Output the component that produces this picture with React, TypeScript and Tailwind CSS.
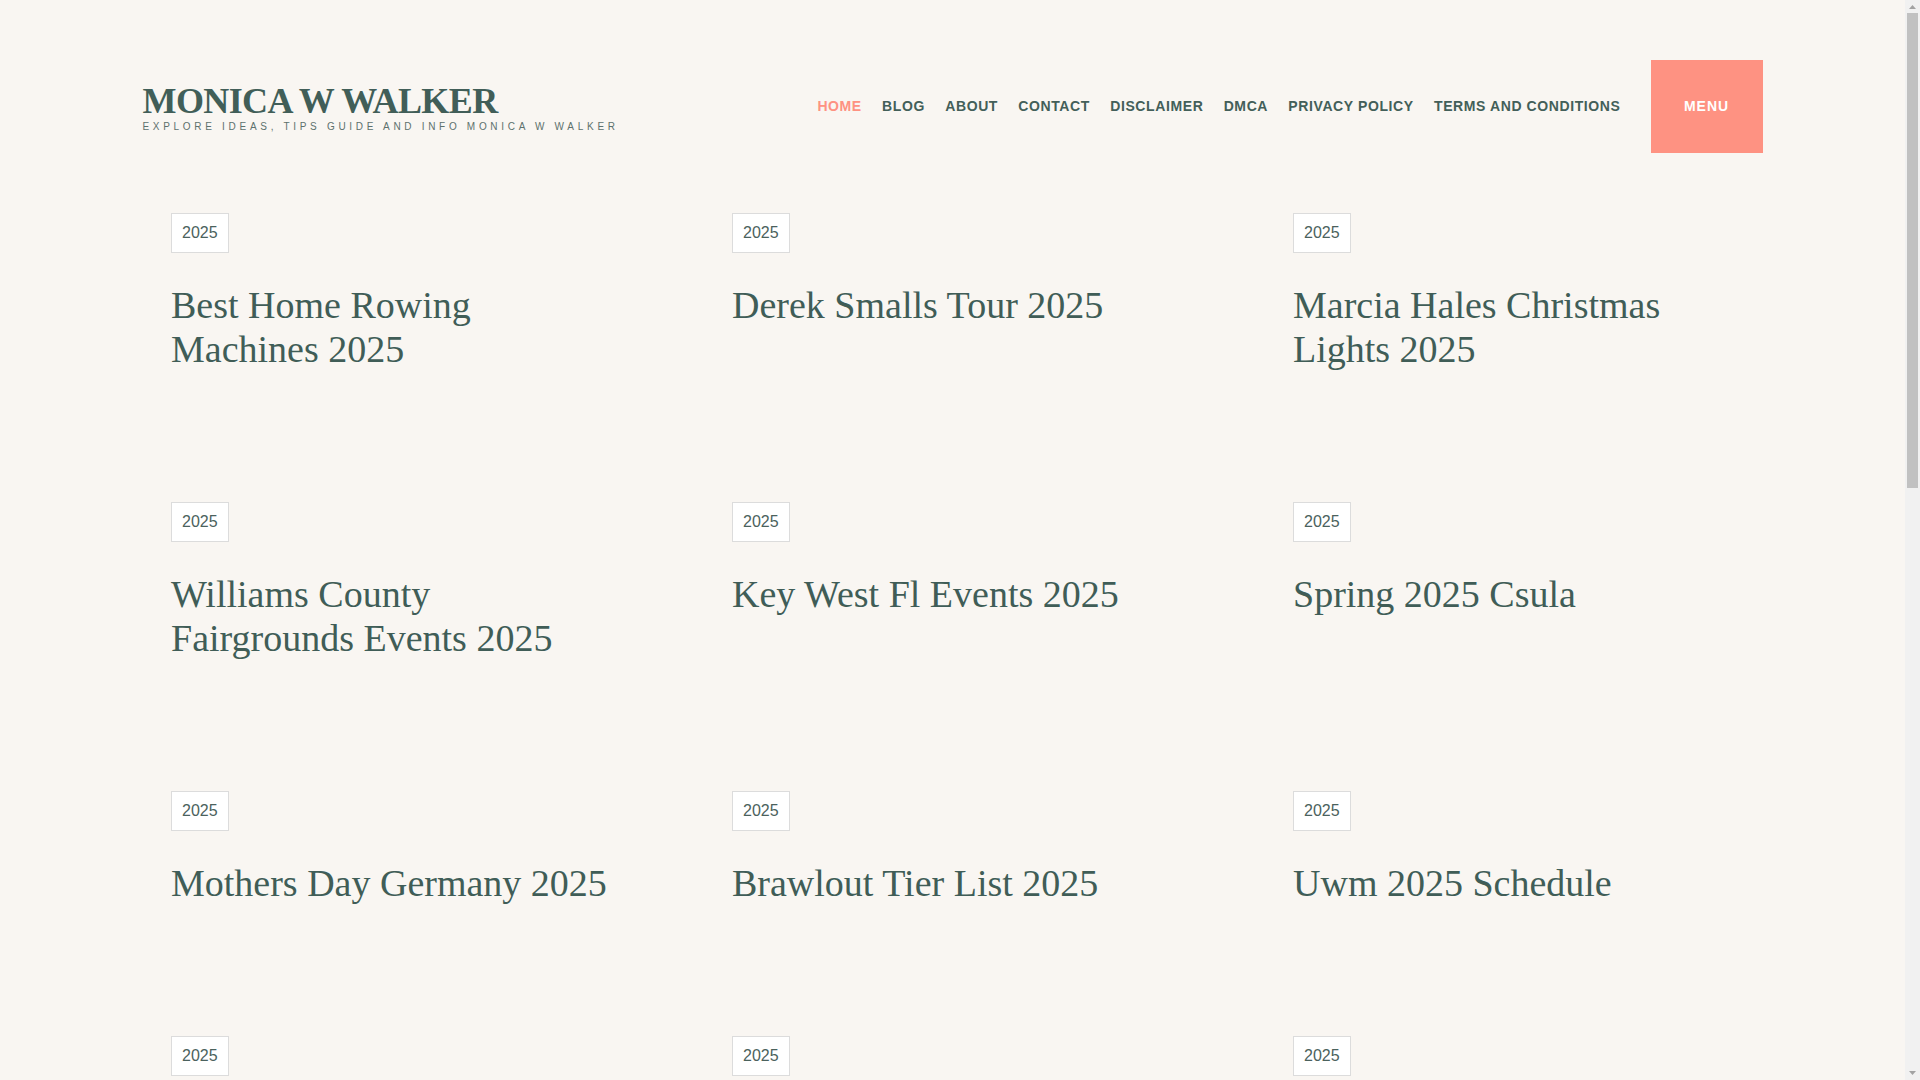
import React from "react";

const posts: string[][] = [
  ["Best Home Rowing Machines 2025", "Derek Smalls Tour 2025", "Marcia Hales Christmas Lights 2025"],
  ["Williams County Fairgrounds Events 2025", "Key West Fl Events 2025", "Spring 2025 Csula"],
  ["Mothers Day Germany 2025", "Brawlout Tier List 2025", "Uwm 2025 Schedule"],
  ["", "", ""],
];

const navItems = ["HOME", "BLOG", "ABOUT", "CONTACT", "DISCLAIMER", "DMCA", "PRIVACY POLICY", "TERMS AND CONDITIONS"];

function Card({ title }: { title: string }) {
  return (
    <article className="px-[60px]">
      <div className="flex">
        <span className="h-[40px] px-[10px] flex items-center border border-[#dcdcdc] bg-white text-[16px] text-[#4b625d] font-['Liberation_Sans',Arial,sans-serif]">
          2025
        </span>
      </div>
      {title && (
        <h2 className="mt-[30px] text-[38px] leading-[44px] text-[#405d57] font-['Liberation_Serif','Times_New_Roman',serif] font-normal">
          {title}
        </h2>
      )}
    </article>
  );
}

function Scrollbar() {
  return (
    <div className="w-[15px] h-full bg-[#f1f1f1] flex flex-col items-center shrink-0">
      <svg width="15" height="13" viewBox="0 0 15 13" className="shrink-0">
        <path d="M4 9 L11 9 L7.5 5 Z" fill="#a3a3a3" />
      </svg>
      <div className="w-[11px] h-[475px] bg-[#c1c1c1]" />
      <div className="flex-1" />
      <svg width="15" height="13" viewBox="0 0 15 13" className="shrink-0">
        <path d="M4 4 L11 4 L7.5 8 Z" fill="#a3a3a3" />
      </svg>
    </div>
  );
}

export default function App() {
  return (
    <div className="flex h-screen overflow-hidden bg-[#f9f6f2] font-['Liberation_Sans',Arial,sans-serif]">
      <div className="flex-1 min-w-0 overflow-hidden">
        <header className="w-[1620px] mx-auto pt-[60px] flex items-center justify-between">
          <div className="mt-[3px]">
            <h1 className="text-[36px] leading-[36px] font-bold tracking-[-0.6px] text-[#415e58] font-['Liberation_Serif','Times_New_Roman',serif]">
              MONICA W WALKER
            </h1>
            <p className="mt-[1px] text-[10px] leading-[14px] tracking-[3.7px] text-[#5d716d]">
              EXPLORE IDEAS, TIPS GUIDE AND INFO MONICA W WALKER
            </p>
          </div>
          <div className="flex items-center">
            <nav className="flex items-center gap-[20.3px]">
              {navItems.map((item) => (
                <a
                  key={item}
                  className={
                    item === "HOME"
                      ? "text-[14px] font-bold tracking-[0.6px] text-[#fe9282]"
                      : "text-[14px] font-bold tracking-[0.6px] text-[#435f59]"
                  }
                >
                  {item}
                </a>
              ))}
            </nav>
            <button className="ml-[30px] w-[112px] h-[93px] bg-[#fe9282] text-white text-[14px] font-bold tracking-[1px] flex items-center justify-center">
              MENU
            </button>
          </div>
        </header>
        <main className="w-[1683px] mx-auto mt-[60px] grid grid-cols-3 gap-y-[131px]">
          {posts.flat().map((t, i) => (
            <Card key={i} title={t} />
          ))}
        </main>
      </div>
      <Scrollbar />
    </div>
  );
}
